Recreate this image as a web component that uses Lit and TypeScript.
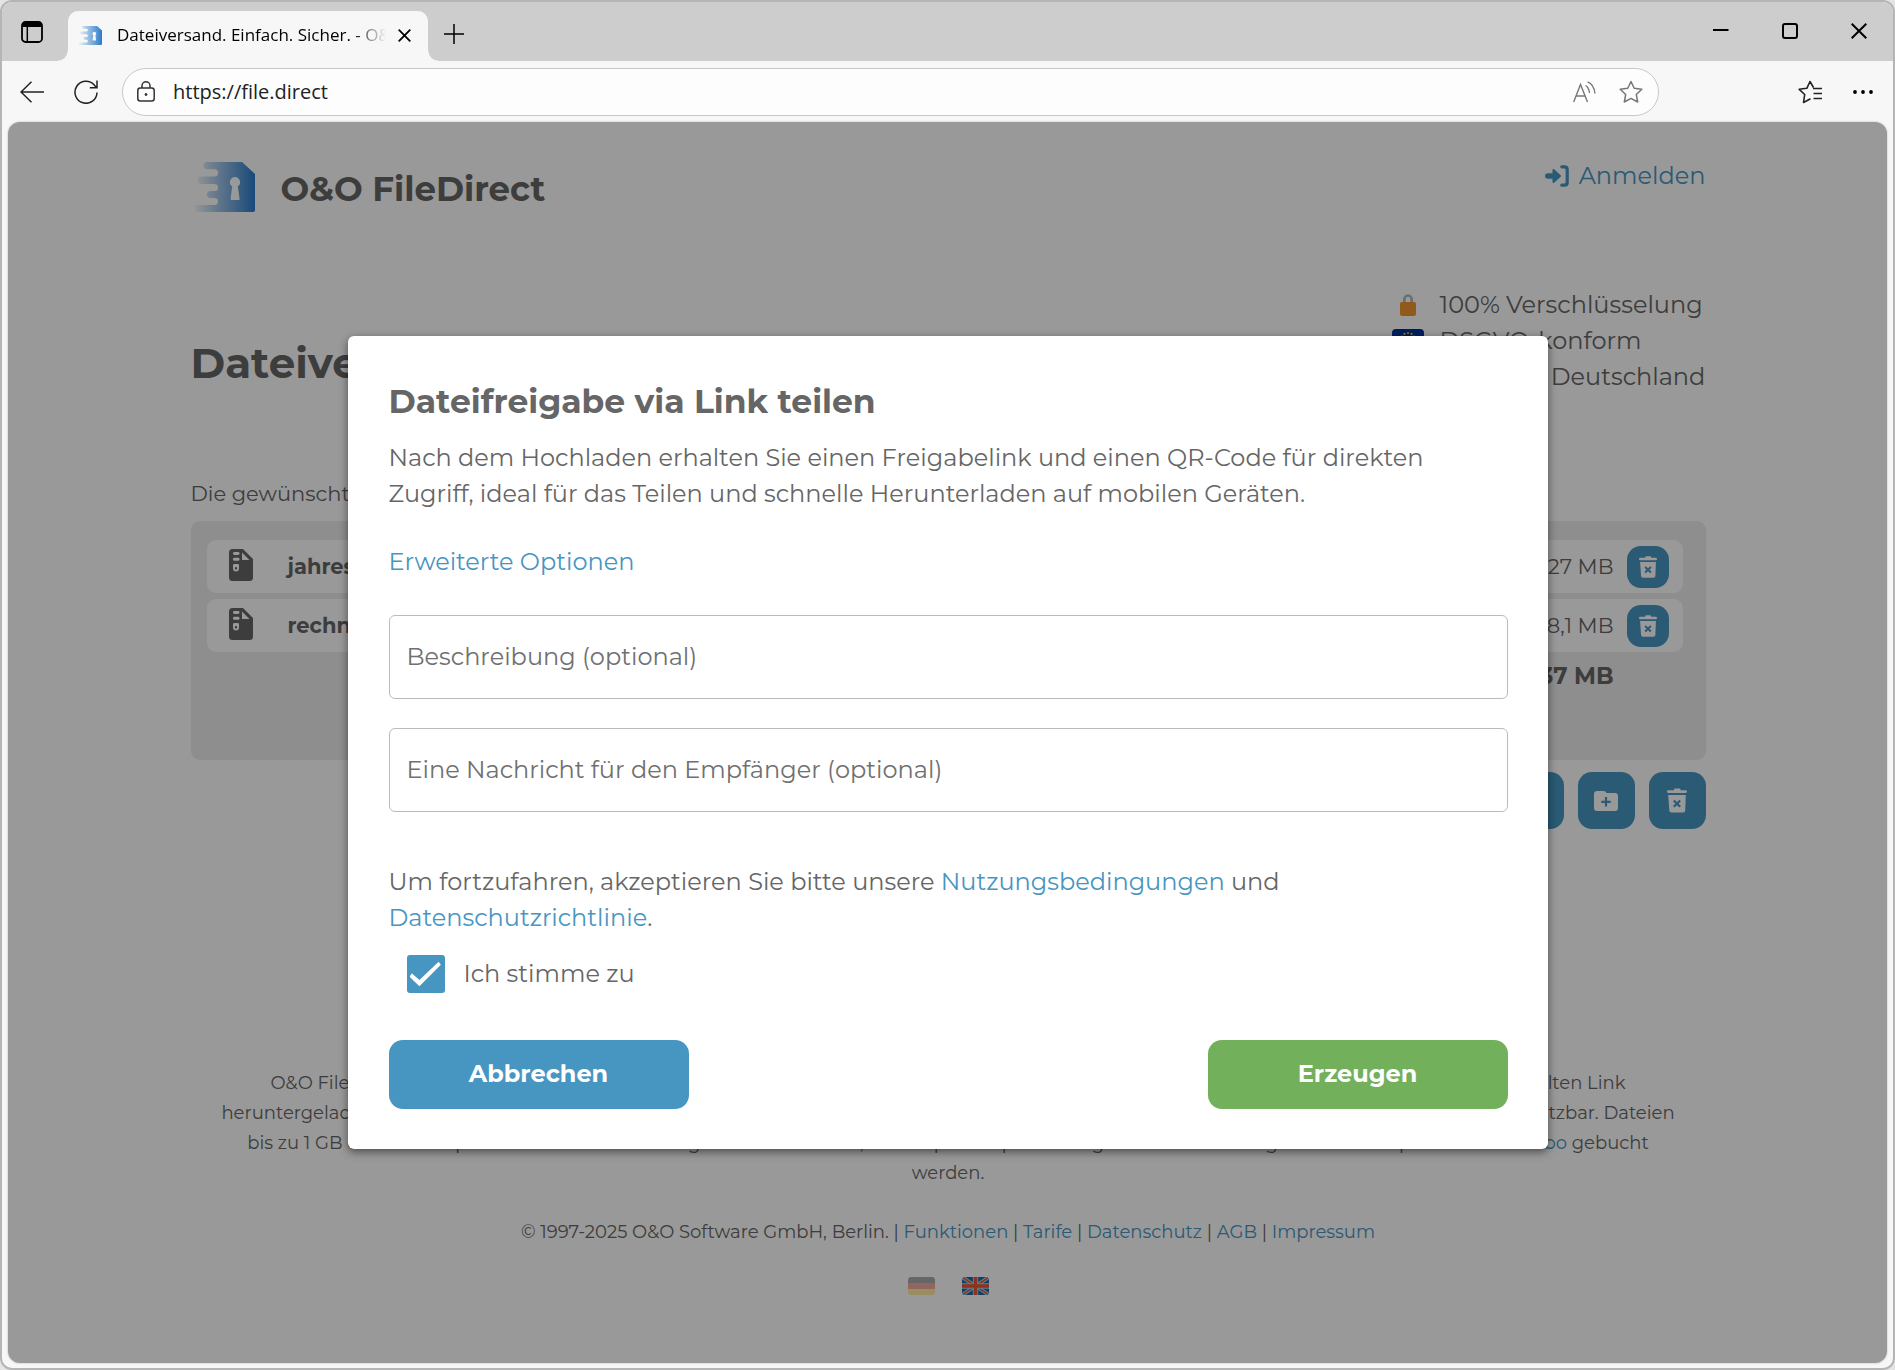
import { LitElement, html, css, svg } from "lit";
import { customElement, state } from "lit/decorators.js";

const logo = (cls: string, id: string) => html`<svg class=${cls} viewBox="0 0 60 50" aria-hidden="true">
  <defs><linearGradient id=${id} x1="0" x2="1" y1="0" y2="0">
    <stop offset="0" stop-color="#3482cd" stop-opacity="0.05"></stop>
    <stop offset="0.35" stop-color="#3482cd" stop-opacity="0.42"></stop>
    <stop offset="1" stop-color="#2a7acb"></stop>
  </linearGradient></defs>
  <path fill="url(#${id})" fill-rule="evenodd" d="M12 0H47L60 12V48Q60 50 58 50H0V43H19.5A3.5 3.5 0 0 0 19.5 36H15.500A3.500 3.500 0 0 1 15.500 29H19.500A3.500 3.500 0 0 0 19.500 22H6.500A3.500 3.500 0 0 1 6.500 14.500H19.500A3.600 3.600 0 0 0 19.500 7.200H12A3.600 3.600 0 0 1 12 0ZM40 15A5.200 5.200 0 0 0 37.200 24.500L35.500 37Q35.500 38 36.500 38H43.500Q45 38 44.600 37L42.800 24.500A5.200 5.200 0 0 0 40 15Z"></path>
</svg>`;

const trash = html`<svg class="trash" viewBox="0 0 20 24" aria-hidden="true">
  <path fill="#fff" d="M7 1Q7 0 8 0H12.500Q13.500 0 13.500 1V1.700H18.700Q20 1.700 20 3T18.700 4.400H1.300Q0 4.400 0 3T1.300 1.700H7ZM1.200 6.500H18.800L18.200 22Q18.100 24 16.200 24H4.300Q2.500 24 2.300 22Z"></path>
  <path stroke="#4796c2" stroke-width="2.200" d="M6.800 12L13.200 18.200M13.200 12L6.800 18.200"></path>
</svg>`;

const archive = html`<svg class="archive" viewBox="0 0 24 32" aria-hidden="true">
  <path fill="#666" fill-rule="evenodd" d="M3.500 0H14L24 10V28.500Q24 32 20.500 32H3.500Q0 32 0 28.500V3.500Q0 0 3.500 0ZM13 3.500V11H20.500Z"></path>
  <g fill="#fff"><rect x="4" y="3" width="6.500" height="3" rx="1.400"></rect><rect x="4" y="8.800" width="6.500" height="3" rx="1.400"></rect>
  <path fill-rule="evenodd" d="M5.500 15H8.800Q10 15 10 16.200V19.500Q10 22.500 7 22.500T4 19.500V16.200Q4 15 5.500 15ZM7 18A1.200 1.200 0 1 0 7 20.400A1.200 1.200 0 1 0 7 18Z"></path></g>
</svg>`;

const starPath = "M12 1.500L15.200 8.300L22.800 9.300L17.300 14.500L18.700 22L12 18.400L5.300 22L6.700 14.500L1.200 9.300L8.800 8.300Z";

const euStars = Array.from({ length: 12 }, (_, i) => {
  const a = (i * Math.PI) / 6;
  return svg`<circle cx=${16 + 7 * Math.sin(a)} cy=${11 - 7 * Math.cos(a)} r="1.1" fill="#fc0"></circle>`;
});

interface SharedFile { name: string; size: string; }

@customElement("app-root")
export class AppRoot extends LitElement {
  @state() private accepted = true;

  private files: SharedFile[] = [
    { name: "jahresabschluss.zip", size: "9,27 MB" },
    { name: "rechnungen.zip", size: "28,1 MB" },
  ];

  static styles = css`
    :host { display: block; font-family: Montserrat, Inter, "Open Sans", sans-serif; color: #666; }
    * { box-sizing: border-box; }
    h1, h2, p, ul { margin: 0; padding: 0; }
    ul { list-style: none; }
    a { color: #4796c2; text-decoration: none; }
    svg { display: block; flex: none; }
    button { font: inherit; border: 0; padding: 0; background: none; cursor: pointer; }
    .backdrop { background: #e4e4e4; }
    .window { min-height: 100vh; display: flex; flex-direction: column; border: 2px solid #b5b5b5; border-radius: 12px; background: #f7f7f7; overflow: hidden; }

    .titlebar { display: flex; align-items: flex-end; height: 59px; background: #cdcdcd; }
    .workspaces { align-self: center; margin: 0 15px 0 19px; width: 22px; }
    .corner { width: 10px; height: 10px; background: radial-gradient(circle at 0 0, transparent 9px, #f7f7f7 10px); }
    .corner.right { background: radial-gradient(circle at 100% 0, transparent 9px, #f7f7f7 10px); }
    .tab { display: flex; align-items: center; width: 360px; height: 50px; padding: 0 17px 2px 11px; border-radius: 10px 10px 0 0; background: #f7f7f7; color: #000; font: 17px/24px "Open Sans", sans-serif; }
    .favicon { width: 23px; height: 21px; }
    .tab-title { flex: 1; margin: 0 12px 0 15px; white-space: nowrap; overflow: hidden; mask-image: linear-gradient(90deg, #000 235px, transparent); }
    .newtab { align-self: center; margin: 4px 0 0 6px; }
    .controls { align-self: flex-start; display: flex; align-items: center; gap: 53px; margin: 19px 26px 0 auto; }

    .toolbar { display: flex; align-items: center; height: 61px; padding: 0 20px 0 18px; }
    .reload { margin: 0 24px 0 30px; }
    .address { flex: 1; display: flex; align-items: center; height: 48px; padding: 0 15px 0 14px; border: 1px solid #c8c8c8; border-radius: 24px; background: #fdfdfd; }
    .url { flex: 1; min-width: 0; margin: 0 18px; padding: 0; border: 0; outline: 0; background: none; color: #222; font: 20px/28px "Open Sans", sans-serif; }
    .star { margin-left: 23px; }
    .favorites { margin: 0 31px 0 139px; }

    .viewport { position: relative; flex: 1; margin: 0 6px 5px; border-radius: 12px; background: #fff; overflow: hidden; box-shadow: 0 0 2px #aaa; }
    .page { max-width: 1516px; margin: 0 auto; padding: 40px 0 40px 1px; }
    .header { display: flex; justify-content: space-between; }
    .brand { display: flex; align-items: center; gap: 26px; height: 50px; padding-left: 4px; font-size: 34px; font-weight: 700; }
    .brand-name { line-height: 54px; padding-top: 4px; }
    .logo { width: 60px; height: 50px; }
    .login { display: flex; align-items: center; gap: 10px; height: 27px; font-size: 24px; }
    .intro { display: flex; justify-content: space-between; margin-top: 75px; }
    .headline { padding-top: 46px; font-size: 42px; line-height: 60px; }
    .facts { font-size: 24px; line-height: 36px; width: 315px; }
    .fact { display: flex; align-items: center; gap: 15px; white-space: nowrap; }
    .fact-icon { width: 34px; display: flex; justify-content: center; }
    .hint { margin-top: 83px; font-size: 21px; line-height: 32px; }
    .panel { display: flex; flex-direction: column; gap: 6px; min-height: 239px; margin-top: 11px; padding: 19px 23px 0 16px; border-radius: 9px; background: #ededed; }
    .files { display: flex; flex-direction: column; gap: 6px; }
    .file { display: flex; align-items: center; height: 53px; padding: 0 14px 0 22px; border-radius: 9px; background: #fff; font-size: 21px; }
    .archive { width: 24px; height: 32px; margin: 0 35px 4px 0; }
    .name { flex: 1; font-weight: 700; }
    .remove { display: grid; place-items: center; width: 42px; height: 42px; margin-left: 13px; border-radius: 14px; background: #4796c2; }
    .remove .trash { width: 18px; height: 22px; }
    .total { padding-right: 69px; text-align: right; font-size: 23px; line-height: 36px; font-weight: 700; }
    .actions { display: flex; justify-content: flex-end; gap: 14px; margin-top: 12px; }
    .action { display: grid; place-items: center; width: 57px; height: 57px; border-radius: 14px; background: #4796c2; }
    .action .trash { width: 20px; height: 25px; }
    .about { margin-top: 239px; text-align: center; font-size: 18px; line-height: 30px; white-space: nowrap; }
    .legal { margin-top: 29px; text-align: center; font-size: 18px; line-height: 30px; }
    .languages { display: flex; justify-content: center; gap: 27px; margin-top: 30px; }
    .flag { width: 27px; height: 18px; }
    .flag.current { opacity: 0.45; }

    .overlay { position: absolute; inset: 0; display: flex; align-items: center; justify-content: center; background: rgba(0, 0, 0, 0.4); }
    .dialog { width: 1200px; max-width: 100%; padding: 41px 40px 40px 41px; border-radius: 6px; background: #fff; box-shadow: 0 3px 8px rgba(0, 0, 0, 0.5); font-size: 24px; line-height: 36px; }
    .title { font-size: 33px; line-height: 48px; margin-bottom: 15px; }
    .options { display: block; width: fit-content; margin: 32px 0 35px; }
    .field { display: block; width: 100%; height: 84px; padding: 0 17px 2px; border: 1px solid #bbb; border-radius: 6px; background: #fff; color: #666; font: inherit; margin-bottom: 29px; }
    .field::placeholder { color: #707070; opacity: 1; }
    .terms { padding-top: 23px; }
    .consent { display: flex; align-items: center; gap: 19px; width: fit-content; margin: 19px 0 47px 18px; }
    .check { appearance: none; width: 38px; height: 38px; margin: 0; border-radius: 3px; border: 2px solid #4796c2; background: #fff; display: grid; place-items: center; }
    .check:checked { background: #4796c2; }
    .check:checked::before { content: ""; width: 32px; height: 26px; background: #fff; clip-path: polygon(6% 50%, 0 61%, 31% 97%, 98% 14%, 91% 3%, 31% 73%, 7% 47%); }
    .buttons { display: flex; justify-content: space-between; }
    .button { width: 300px; height: 69px; padding-bottom: 2px; border-radius: 14px; background: #4796c2; color: #fff; font-size: 24px; font-weight: 700; }
    .button.primary { background: #72b05b; }
  `;

  render() {
    return html`<div class="backdrop"><div class="window">
      <header class="titlebar">
        <button class="workspaces" aria-label="Arbeitsbereiche"><svg width="22" height="22" viewBox="0 0 22 22"><rect x="1" y="1" width="20" height="20" rx="3.500" fill="none" stroke="#000" stroke-width="1.800"></rect><path d="M1 6V4Q1 1 4 1H18Q21 1 21 4V6Z"></path><path d="M6.300 5V21" stroke="#000" stroke-width="1.500"></path></svg></button>
        <span class="corner"></span>
        <div class="tab">${logo("favicon", "g1")}<span class="tab-title">Dateiversand. Einfach. Sicher. - O&amp;O</span>
          <button aria-label="Tab schließen"><svg width="13" height="13" viewBox="0 0 13 13"><path d="M.7 .7L12.300 12.300M12.300 .7L.7 12.300" stroke="#000" stroke-width="1.800"></path></svg></button></div>
        <span class="corner right"></span>
        <button class="newtab" aria-label="Neuer Tab"><svg width="20" height="20" viewBox="0 0 20 20"><path d="M10 0V20M0 10H20" stroke="#000" stroke-width="1.500"></path></svg></button>
        <div class="controls">
          <button aria-label="Minimieren"><svg width="16" height="20" viewBox="0 0 16 20"><path d="M0 9H15.500" stroke="#000" stroke-width="2"></path></svg></button>
          <button aria-label="Maximieren"><svg width="16" height="16" viewBox="0 0 16 16"><rect x="1" y="1" width="14" height="14" rx="2" fill="none" stroke="#000" stroke-width="2"></rect></svg></button>
          <button aria-label="Schließen"><svg width="16" height="16" viewBox="0 0 16 16"><path d="M.7 .7L15.300 15.300M15.300 .7L.7 15.300" stroke="#000" stroke-width="2"></path></svg></button>
        </div>
      </header>
      <nav class="toolbar">
        <button aria-label="Zurück"><svg width="24" height="22" viewBox="0 0 24 22" fill="none" stroke="#222" stroke-width="1.500"><path d="M24 11H1M11.500 .8L1 11L11.500 21.200"></path></svg></button>
        <button class="reload" aria-label="Neu laden"><svg width="24" height="24" viewBox="0 0 24 24" fill="none" stroke="#222" stroke-width="1.500"><path d="M23 12.500A11 11 0 1 1 20 4.700L22.500 7.500M23 .5V7.700H15.800"></path></svg></button>
        <div class="address">
          <svg width="18" height="21" viewBox="0 0 18 21" fill="none" stroke="#333" stroke-width="1.500"><rect x=".8" y="7" width="16.400" height="13" rx="2.500"></rect><path d="M5 7V4.800A4 4 0 0 1 13 4.800V7"></path><circle cx="9" cy="13.500" r="1" fill="#333" stroke-width="1"></circle></svg>
          <input class="url" aria-label="Adresse" .value=${"https://file.direct"} />
          <button aria-label="Laut vorlesen"><svg width="23" height="22" viewBox="0 0 23 22" fill="none" stroke="#777" stroke-width="1.400"><path d="M.7 21L7.500 3.500L14.500 21M3.200 15H12.200M12.500 4.500Q16 6.500 16.500 12M14.500 .8Q21 3 22 12.500"></path></svg></button>
          <button class="star" aria-label="Favorit hinzufügen"><svg width="24" height="24" viewBox="0 0 24 24" fill="none" stroke="#777" stroke-width="1.500" stroke-linejoin="round"><path d=${starPath}></path></svg></button>
        </div>
        <button class="favorites" aria-label="Favoriten"><svg width="24" height="24" viewBox="0 0 24 24" fill="none" stroke="#222" stroke-width="1.600" stroke-linejoin="round"><path d="M15.500 7.500L12 1.500L8.800 8.300L1.200 9.300L6.700 14.500L5.500 22.500L12.500 18.800M15 8.500H24M15.500 13.500H24M15.500 18.500H24"></path></svg></button>
        <button aria-label="Einstellungen"><svg width="20" height="4" viewBox="0 0 20 4"><circle cx="2" cy="2" r="1.900"></circle><circle cx="10" cy="2" r="1.900"></circle><circle cx="18" cy="2" r="1.900"></circle></svg></button>
      </nav>
      <div class="viewport">
        <main class="page">
          <div class="header">
            <div class="brand">${logo("logo", "g2")}<span class="brand-name">O&amp;O FileDirect</span></div>
            <a class="login" href="#login"><svg width="24" height="22" viewBox="0 0 24 22" fill="none" stroke="#4796c2"><path d="M2.800 11H9" stroke-width="5.600" stroke-linecap="round"></path><path d="M8.500 5L15 11L8.500 17Z" fill="#4796c2" stroke-width="2" stroke-linejoin="round"></path><path d="M16.800 1.800H19.500Q22.200 1.800 22.200 4.500V17.500Q22.200 20.200 19.500 20.200H16.800" stroke-width="3.200" stroke-linecap="round"></path></svg>Anmelden</a>
          </div>
          <div class="intro">
            <h1 class="headline">Dateiversand. Einfach. Sicher.</h1>
            <ul class="facts">
              <li class="fact"><span class="fact-icon"><svg width="16" height="22" viewBox="0 0 16 22"><path d="M4.300 10V5.500A3.700 4 0 0 1 11.700 5.500V10" fill="none" stroke="#aab8c2" stroke-width="2.600"></path><rect y="8" width="16" height="14" rx="2" fill="#f4952f"></rect></svg></span><span>100% Verschlüsselung</span></li>
              <li class="fact"><span class="fact-icon"><svg width="32" height="24" viewBox="0 0 32 24"><rect width="32" height="24" rx="4" fill="#039"></rect>${euStars}</svg></span><span>DSGVO-konform</span></li>
              <li class="fact"><span class="fact-icon"><svg width="32" height="24" viewBox="0 0 32 24"><rect width="32" height="24" rx="4" fill="#fc0"></rect><path fill="#d00" d="M0 8H32V16H0Z"></path><path d="M4 0H28Q32 0 32 4V8H0V4Q0 0 4 0Z"></path></svg></span><span>Server in Deutschland</span></li>
            </ul>
          </div>
          <p class="hint">Die gewünschten Dateien wurden hinzugefügt.</p>
          <section class="panel">
            <ul class="files">${this.files.map((f) => html`<li class="file">${archive}<span class="name">${f.name}</span><span>${f.size}</span><button class="remove" aria-label="Datei entfernen">${trash}</button></li>`)}</ul>
            <p class="total">37,37 MB</p>
          </section>
          <div class="actions">
            <button class="action" aria-label="Datei hinzufügen"><svg width="24" height="20" viewBox="0 0 24 20"><path fill="#fff" d="M3 0H15L21 6V20H3Z"></path></svg></button>
            <button class="action" aria-label="Ordner hinzufügen"><svg width="24" height="20" viewBox="0 0 24 20"><path fill="#fff" d="M3 0H9.500Q11 0 11.500 .8L12.500 2H21Q24 2 24 5V17Q24 20 21 20H3Q0 20 0 17V3Q0 0 3 0Z"></path><path d="M12 6V15.500M7.300 10.800H16.700" stroke="#4796c2" stroke-width="2.200"></path></svg></button>
            <button class="action" aria-label="Alle entfernen">${trash}</button>
          </div>
          <p class="about">O&amp;O FileDirect ermöglicht den sicheren und einfachen Versand großer Dateien, die vom Anwender über den automatisch per E-Mail mitgeteilten Link<br />heruntergeladen werden können. Die Übertragung ist dabei vollständig verschlüsselt und der Dienst auch ohne vorherige Registrierung einfach nutzbar. Dateien<br />bis zu 1 GB oder einer Speicherdauer von zehn Tagen sind kostenfrei, mehr Speicherplatz und größere Datenmengen können separat über ein <a href="#abo">Abo</a> gebucht<br />werden.</p>
          <p class="legal">© 1997-2025 O&amp;O Software GmbH, Berlin. | <a href="#funktionen">Funktionen</a> | <a href="#tarife">Tarife</a> | <a href="#datenschutz">Datenschutz</a> | <a href="#agb">AGB</a> | <a href="#impressum">Impressum</a></p>
          <div class="languages">
            <a href="#de" aria-label="Deutsch"><svg class="flag current" viewBox="0 0 27 18"><rect width="27" height="18" rx="3.500" fill="#ffd43b"></rect><path fill="#e0452c" d="M0 6H27V12H0Z"></path><path fill="#444" d="M3.500 0H23.500Q27 0 27 3.500V6H0V3.500Q0 0 3.500 0Z"></path></svg></a>
            <a href="#en" aria-label="English"><svg class="flag" viewBox="0 0 27 18"><clipPath id="uk"><rect width="27" height="18" rx="3.500"></rect></clipPath><g clip-path="url(#uk)" fill="none"><rect width="27" height="18" fill="#1c6ca8"></rect><path d="M0 0L27 18M27 0L0 18" stroke="#a5d3ee" stroke-width="3.600"></path><path d="M0 0L27 18M27 0L0 18" stroke="#e8552f" stroke-width="1.500"></path><path d="M13.500 0V18M0 9H27" stroke="#a5d3ee" stroke-width="5.400"></path><path d="M13.500 0V18M0 9H27" stroke="#e8552f" stroke-width="3.400"></path></g></svg></a>
          </div>
        </main>
        <div class="overlay">
          <section class="dialog" role="dialog" aria-modal="true" aria-labelledby="dialog-title">
            <h2 class="title" id="dialog-title">Dateifreigabe via Link teilen</h2>
            <p>Nach dem Hochladen erhalten Sie einen Freigabelink und einen QR-Code für direkten Zugriff, ideal für das Teilen und schnelle Herunterladen auf mobilen Geräten.</p>
            <a class="options" href="#optionen">Erweiterte Optionen</a>
            <input class="field" type="text" aria-label="Beschreibung (optional)" placeholder="Beschreibung (optional)" />
            <input class="field" type="text" aria-label="Eine Nachricht für den Empfänger (optional)" placeholder="Eine Nachricht für den Empfänger (optional)" />
            <p class="terms">Um fortzufahren, akzeptieren Sie bitte unsere <a href="#nutzung">Nutzungsbedingungen</a> und <br /><a href="#richtlinie">Datenschutzrichtlinie</a>.</p>
            <label class="consent"><input class="check" type="checkbox" .checked=${this.accepted} @change=${(e: Event) => (this.accepted = (e.target as HTMLInputElement).checked)} />Ich stimme zu</label>
            <div class="buttons"><button class="button">Abbrechen</button><button class="button primary">Erzeugen</button></div>
          </section>
        </div>
      </div>
    </div></div>`;
  }
}
